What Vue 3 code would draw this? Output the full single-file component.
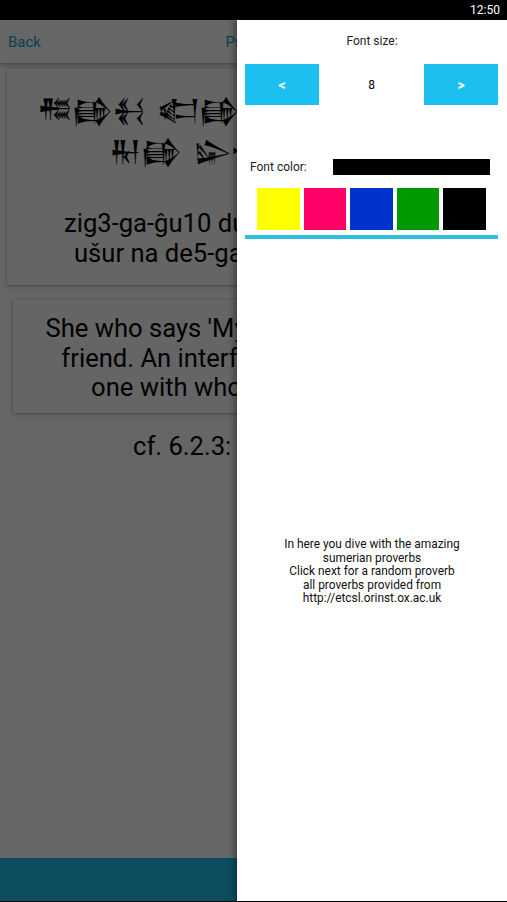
<script setup>
const swatches = ['#ffff00', '#ff0066', '#0033cc', '#009900', '#000000']
</script>

<template>
  <div class="screen">
    <div class="status"><span>12:50</span></div>
    <div class="main">
      <div class="page">
        <nav class="nav">
          <span class="link">Back</span>
          <span class="link">Previous</span>
          <span class="link">Next</span>
        </nav>
        <section class="card first">
          <p class="cunei">𒍣𒂵𒈬 𒅗𒂵 𒍪𒈾𒁲𒂵𒀀𒂵𒈬<br>𒊑𒂵 𒇽𒈾𒁲𒀀𒂵𒈬𒀀</p>
          <p class="big">zig3-ga-ĝu10 du11-ga-am3 e-še-a<br>ušur na de5-ga-am3 e-še-ga-am</p>
        </section>
        <section class="card second">
          <p class="big">She who says 'My husband is a good<br>friend. An interfering neighbour is,<br>one with whom I live at ease'</p>
        </section>
        <p class="big cf">cf. 6.2.3: A 1.7.12.34.</p>
        <div class="grow"></div>
        <footer class="bar"></footer>
      </div>
      <div class="scrim"></div>
      <aside class="drawer">
        <div class="label">Font size:</div>
        <div class="stepper">
          <button class="step">&lt;</button>
          <span class="value">8</span>
          <button class="step">&gt;</button>
        </div>
        <div class="color-row">
          <span class="color-label">Font color:</span>
          <span class="current"></span>
        </div>
        <div class="swatches">
          <span v-for="c in swatches" :key="c" class="swatch" :style="{ background: c }"></span>
        </div>
        <div class="rule"></div>
        <p class="about">In here you dive with the amazing<br>sumerian proverbs<br>Click next for a random proverb<br>all proverbs provided from<br>http://etcsl.orinst.ox.ac.uk</p>
      </aside>
    </div>
  </div>
</template>

<style>
html, body { margin: 0; background: #000; }
</style>

<style scoped>
.screen { width: 507px; height: 902px; display: flex; flex-direction: column; overflow: hidden; font-family: Roboto, "Liberation Sans", sans-serif; color: #000; background: #000; }
.status { height: 20px; flex: none; background: #000; color: #fff; font-size: 12px; display: flex; align-items: center; justify-content: flex-end; padding-right: 7px; }
.main { position: relative; flex: 1; margin-bottom: 1px; overflow: hidden; }
.page { height: 100%; background: #fff; display: flex; flex-direction: column; }
.nav { height: 43px; flex: none; display: flex; align-items: center; justify-content: space-between; padding: 0 8px; box-shadow: 0 2px 4px rgba(0,0,0,.3); font-size: 15px; margin-bottom: 6px; }
.link { color: #1c9fd0; }
.card { background: #fdfdfd; box-shadow: 0 1px 4px rgba(0,0,0,.35); text-align: center; }
.first { margin: 0 7px; height: 216px; box-sizing: border-box; padding-top: 21px; }
.second { margin: 15px 13px 0; height: 113px; box-sizing: border-box; padding-top: 14px; }
.cunei { margin: 0 -40px; font-size: 29px; line-height: 41px; height: 119px; white-space: pre; word-spacing: 8px; transform: scaleX(.8); transform-origin: center top; }
.big { margin: 0; font-size: 25.6px; line-height: 29.7px; white-space: nowrap; text-align: center; }
.cf { margin-top: 19px; }
.grow { flex: 1; }
.bar { height: 43px; flex: none; background: #1fc4f0; }
.scrim { position: absolute; inset: 0; background: rgba(0,0,0,.6); }
.drawer { position: absolute; top: 0; right: 0; bottom: 0; width: 270px; box-sizing: border-box; padding: 0 8px; background: #fff; box-shadow: -3px 0 6px rgba(0,0,0,.35); font-size: 12px; display: flex; flex-direction: column; }
.label { text-align: center; margin-top: 14px; line-height: 14px; color: #222; }
.stepper { display: flex; justify-content: space-between; align-items: center; margin-top: 16px; padding-right: 1px; }
.step { width: 74px; height: 41px; border: 0; padding: 0; background: #1cc0f0; color: #fff; font: 700 14px Roboto, sans-serif; }
.value { font-size: 12px; }
.color-row { display: flex; align-items: center; margin-top: 54px; padding-left: 5px; height: 16px; }
.color-label { width: 83px; color: #222; white-space: nowrap; }
.current { width: 157px; height: 16px; background: #000; }
.swatches { display: flex; gap: 4px; padding-left: 12px; margin-top: 13px; }
.swatch { width: 42.6px; height: 42px; }
.rule { height: 4px; width: 253px; margin-top: 5px; background: #2dbfdf; }
.about { margin: 299px 0 0; text-align: center; font-size: 11.9px; line-height: 13.5px; color: #111; }
</style>
